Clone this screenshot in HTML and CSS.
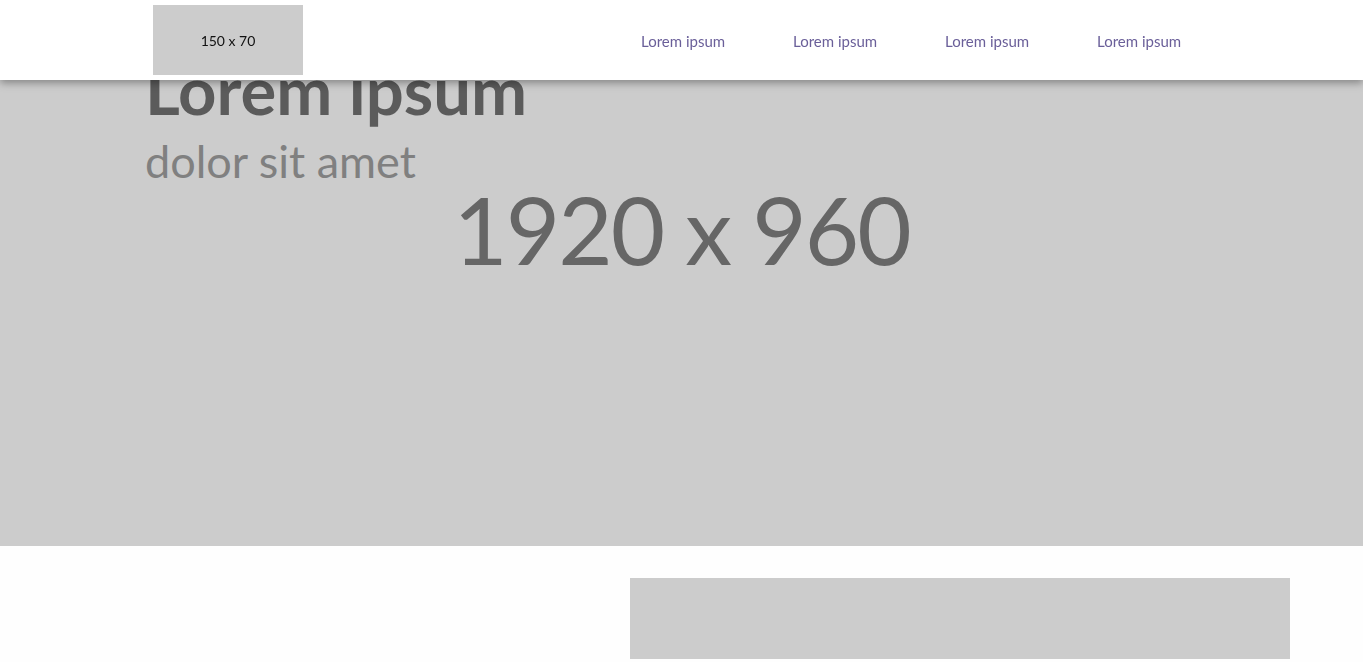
FILE: index.html
```html
<!DOCTYPE html>
<html lang="en">
<head>
<meta charset="utf-8">
<title>Lorem ipsum</title>
<link rel="stylesheet" href="styles.css">
</head>
<body>
<header class="site-header">
  <div class="header-inner">
    <div class="logo">150 x 70</div>
    <nav class="nav">
      <a href="#">Lorem ipsum</a>
      <a href="#">Lorem ipsum</a>
      <a href="#">Lorem ipsum</a>
      <a href="#">Lorem ipsum</a>
    </nav>
  </div>
</header>
<section class="hero">
  <div class="hero-label">1920 x 960</div>
  <div class="hero-text">
    <h1>Lorem ipsum</h1>
    <p>dolor sit amet</p>
  </div>
</section>
<section class="content">
  <div class="content-inner">
    <div class="col-left"></div>
    <div class="col-right"><div class="box"></div></div>
  </div>
</section>
</body>
</html>
```
FILE: styles.css
```css
* { box-sizing: border-box; }
html, body { margin: 0; padding: 0; }
body {
  font-family: Lato, "Open Sans", sans-serif;
  background: #fefefe;
  overflow: hidden;
  height: 662px;
}
.site-header {
  position: fixed;
  top: 0; left: 0; right: 0;
  height: 80px;
  background: #fff;
  box-shadow: 0 3px 8px rgba(0,0,0,0.35);
  z-index: 10;
}
.header-inner {
  display: flex;
  align-items: flex-start;
  padding-left: 153px;
  height: 100%;
}
.logo {
  width: 150px;
  height: 70px;
  margin-top: 5px;
  background: #ccc;
  color: #111;
  font-size: 14px;
  display: flex;
  align-items: center;
  justify-content: center;
}
.nav {
  display: flex;
  margin-left: 338px;
  padding-top: 32px;
}
.nav a {
  color: #6a5f99;
  text-decoration: none;
  font-size: 15px;
  width: 152px;
}
.hero {
  position: relative;
  height: 546px;
  background: #ccc;
  display: flex;
  flex-direction: column;
}
.hero-text {
  padding: 54px 0 0 145px;
}
.hero-text h1 {
  margin: 0;
  font-size: 67px;
  font-weight: 700;
  color: #5b5b5b;
  line-height: 70px;
}
.hero-text p {
  margin: 2px 0 0;
  font-size: 45px;
  color: #808080;
  line-height: 70px;
}
.hero-label {
  position: absolute;
  left: 0; right: 0;
  top: 171px;
  text-align: center;
  font-size: 94px;
  color: #666;
  line-height: 116px;
  letter-spacing: -2px;
}
.content-inner {
  display: flex;
  padding-top: 32px;
}
.col-left { width: 630px; }
.col-right { width: 660px; }
.box {
  height: 81px;
  background: #ccc;
}
```
